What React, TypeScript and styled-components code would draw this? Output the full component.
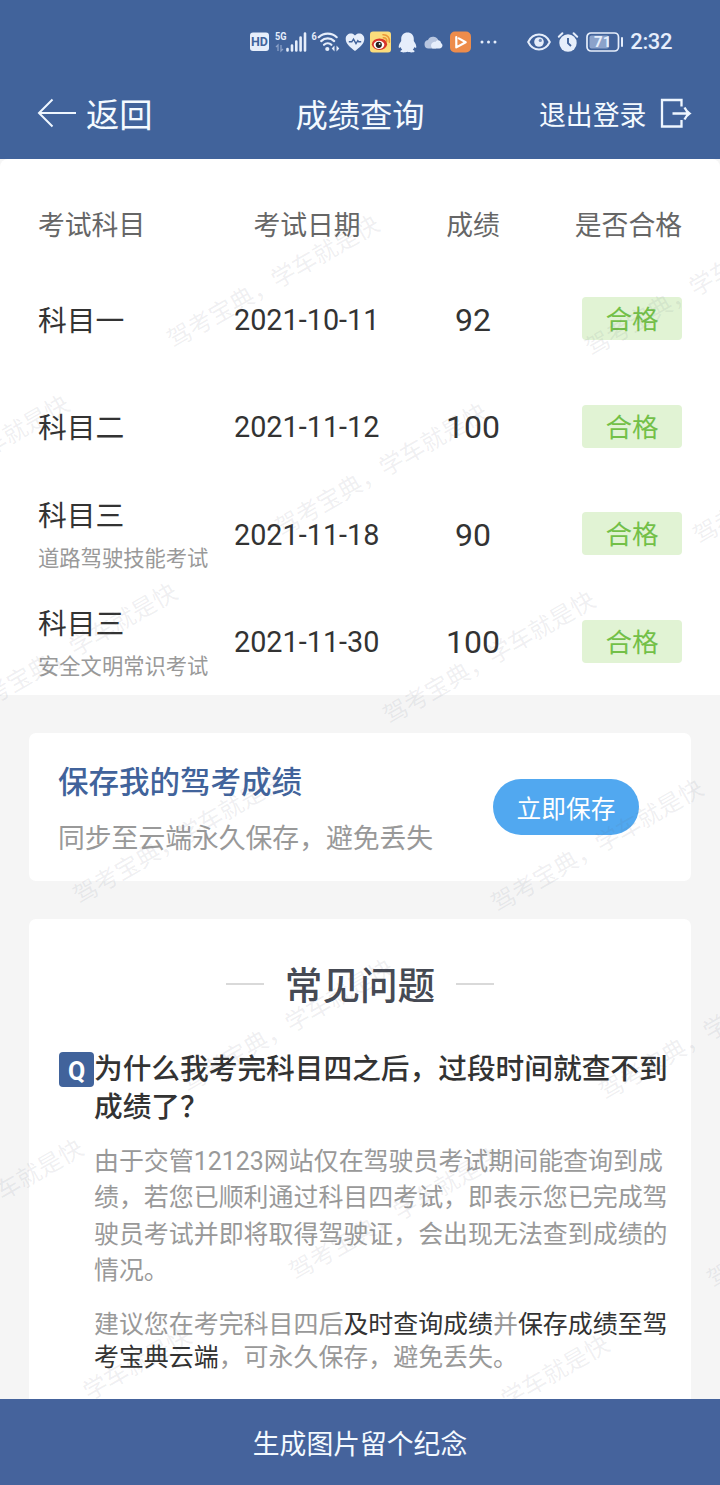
import React from 'react';
import styled, { createGlobalStyle } from 'styled-components';

const GlobalStyle = createGlobalStyle`
  * { box-sizing: border-box; }
  body {
    margin: 0;
    background: #f5f5f5;
    font-family: Roboto, 'Noto Sans CJK SC', sans-serif;
    color: #333;
  }
`;

const Screen = styled.div`
  position: relative;
  width: 720px;
  height: 1485px;
  display: flex;
  flex-direction: column;
  overflow: hidden;
`;

const TopBar = styled.header`
  position: relative;
  z-index: 3;
  flex: none;
  height: 159px;
  background: #41639b;
  color: #f4faff;
`;

const StatusBar = styled.div`
  height: 84px;
  padding: 0 48px 0 249px;
  display: flex;
  align-items: center;
  justify-content: space-between;
`;

const StatusGroup = styled.div`
  display: flex;
  align-items: center;
`;

const Glyph = styled.svg<{ $gap?: number; $before?: number }>`
  display: block;
  flex: none;
  margin-left: ${({ $before = 0 }) => $before}px;
  margin-right: ${({ $gap = 0 }) => $gap}px;
  overflow: visible;
`;

const Clock = styled.span`
  font-size: 22px;
  line-height: 30px;
  letter-spacing: -0.4px;
  font-weight: 500;
  color: #e6eefb;
`;

const NavBar = styled.nav`
  height: 62px;
  padding: 0 29px 0 37px;
  display: grid;
  grid-template-columns: 196px 1fr 204px;
  align-items: center;
`;

const NavAction = styled.div<{ $end?: boolean; $size: number }>`
  display: flex;
  align-items: center;
  justify-content: ${({ $end }) => ($end ? 'flex-end' : 'flex-start')};
  font-size: ${({ $size }) => $size}px;
  line-height: 44px;
  white-space: nowrap;
`;

const NavLabel = styled.span`
  padding-top: 2px;
`;

const NavTitle = styled.h1`
  margin: 0;
  padding-top: 2px;
  font-size: 32.3px;
  line-height: 44px;
  font-weight: 400;
  text-align: center;
  white-space: nowrap;
`;

const Scores = styled.section`
  flex: none;
  height: 536px;
  background: #fff;
  border-radius: 8px 8px 0 0;
`;

const ScoreRow = styled.div<{ $head?: boolean }>`
  height: ${({ $head }) => ($head ? 106 : 107.5)}px;
  padding: ${({ $head }) => ($head ? '22px' : '0')} 38px 0;
  display: grid;
  grid-template-columns: 196px 146px 186px 1fr;
  align-items: center;
  font-size: 26.8px;
  color: ${({ $head }) => ($head ? '#666' : '#333')};
  white-space: nowrap;
`;

const Cell = styled.div<{ $align?: string }>`
  display: flex;
  justify-content: ${({ $align = 'flex-start' }) => $align};
`;

const Subject = styled.div`
  padding-top: 4px;
  display: flex;
  flex-direction: column;
`;

const SubjectName = styled.span`
  font-size: 28.8px;
  line-height: 42px;
`;

const SubjectNote = styled.span`
  font-size: 21.3px;
  line-height: 34px;
  margin-top: 5px;
  color: #999;
`;

const ExamDate = styled.span`
  padding-top: 2px;
  font-size: 28.8px;
  line-height: 40px;
`;

const Score = styled.span`
  padding-top: 2px;
  font-size: 32px;
  line-height: 42px;
`;

const PassBadge = styled.span`
  width: 100px;
  height: 43px;
  border-radius: 4px;
  background: #e1f3d4;
  color: #73c048;
  font-size: 26.6px;
  line-height: 46px;
  text-align: center;
`;

const Card = styled.section`
  flex: none;
  width: 662px;
  margin: 38px auto 0;
  background: #fff;
  border-radius: 7px;
`;

const SaveCard = styled(Card)`
  height: 148px;
  padding: 0 52px 0 29px;
  display: flex;
  align-items: center;
  justify-content: space-between;
  white-space: nowrap;
`;

const SaveCopy = styled.div`
  padding-top: 6px;
`;

const SaveTitle = styled.h2`
  margin: 0;
  font-size: 30.5px;
  line-height: 44px;
  font-weight: 500;
  color: #41639b;
`;

const SaveHint = styled.p`
  margin: 14px 0 0;
  font-size: 26.8px;
  line-height: 40px;
  color: #999;
`;

const SaveButton = styled.button`
  width: 146px;
  height: 56px;
  padding: 0;
  border: 0;
  border-radius: 28px;
  background: #51a8f0;
  color: #fff;
  font: 400 24.7px/56px Roboto, 'Noto Sans CJK SC', sans-serif;
`;

const SaveLabel = styled.span`
  display: block;
  padding-top: 3px;
`;

const FaqCard = styled(Card)`
  height: 490px;
  padding: 41px 0 0 30px;
`;

const FaqHeading = styled.h2`
  margin: 0 30px 0 0;
  display: flex;
  align-items: center;
  justify-content: center;
  gap: 21px;
  font-size: 37.6px;
  line-height: 52px;
  font-weight: 500;
  color: #464a54;

  &::before,
  &::after {
    content: '';
    width: 38px;
    height: 2px;
    background: #d9d9d9;
    margin-top: -5px;
  }
`;

const FaqEntry = styled.div`
  margin-top: 38px;
  display: flex;
  align-items: flex-start;
`;

const QMark = styled.span`
  width: 35px;
  height: 35px;
  margin-top: 2px;
  border-radius: 4px;
  background: #41639b;
  color: #fff;
  font-size: 25px;
  font-weight: 700;
  line-height: 39px;
  text-align: center;
`;

const FaqText = styled.div`
  white-space: nowrap;
`;

const Question = styled.h3`
  margin: 0;
  font-size: 28.7px;
  line-height: 38px;
  font-weight: 500;
  color: #333;
`;

const Answer = styled.p<{ $leading: number; $top: number }>`
  margin: ${({ $top }) => $top}px 0 0;
  font-size: 24.94px;
  line-height: ${({ $leading }) => $leading}px;
  color: #999;
`;

const Strong = styled.strong`
  font-weight: 400;
  color: #333;
`;

const Footer = styled.footer`
  position: relative;
  z-index: 3;
  flex: none;
  height: 86px;
  margin-top: auto;
  background: #45639c;
  color: #f4faff;
  font-size: 26.8px;
  line-height: 92px;
  text-align: center;
`;

const Content = styled.main`
  flex: 1 1 0;
  min-height: 0;
  display: flex;
  flex-direction: column;
  overflow: hidden;
`;

const WatermarkLayer = styled.div`
  position: absolute;
  inset: 0;
  z-index: 2;
  overflow: hidden;
  pointer-events: none;
`;

const Watermark = styled.span<{ $x: number; $y: number }>`
  position: absolute;
  left: ${({ $x }) => $x}px;
  top: ${({ $y }) => $y - 30}px;
  font-size: 24px;
  line-height: 30px;
  white-space: nowrap;
  color: rgba(95, 105, 125, 0.1);
  transform: rotate(-30deg);
  transform-origin: 0 100%;
`;

const results = [
  { subject: '科目一', date: '2021-10-11', score: 92 },
  { subject: '科目二', date: '2021-11-12', score: 100 },
  { subject: '科目三', note: '道路驾驶技能考试', date: '2021-11-18', score: 90 },
  { subject: '科目三', note: '安全文明常识考试', date: '2021-11-30', score: 100 },
];

const watermarks = [
  [487, 167], [177, 355], [595, 363], [-133, 535], [285, 543], [703, 551],
  [-25, 723], [393, 731], [83, 911], [501, 919], [191, 1099], [609, 1107],
  [-119, 1279], [299, 1287], [717, 1295], [-11, 1467], [407, 1475],
];

const ink = '#e6eefb';

const StatusIcons = () => (
  <StatusGroup>
    <Glyph width="20" height="20" viewBox="0 0 20 20" $gap={6}>
      <rect x="1" y="0.5" width="19" height="18.5" rx="3" fill={ink} />
      <text x="10.5" y="14.3" fontSize="12.5" fontWeight="700" textAnchor="middle" fill="#41639b">HD</text>
    </Glyph>
    <Glyph width="32" height="22" viewBox="0 0 32 22" $gap={5}>
      <text x="0" y="9" fontSize="11.5" fontWeight="700" textLength="11.5" lengthAdjust="spacingAndGlyphs" fill={ink}>5G</text>
      <path d="M3 20v-6l-2 2M6 14v6l2-2" fill="none" stroke="#8ba1c8" strokeWidth="1.3" />
      <path d="M12.5 19.5v-1.5M17 19.5v-5M21.3 19.5v-9M25.6 19.5v-13M30 19.5v-17" stroke={ink} strokeWidth="2.6" strokeLinecap="round" />
    </Glyph>
    <Glyph width="28" height="22" viewBox="0 0 28 22" $gap={4.5}>
      <text x="-0.5" y="9" fontSize="11" fontWeight="700" textLength="5.2" lengthAdjust="spacingAndGlyphs" fill={ink}>6</text>
      <g fill="none" stroke={ink} strokeWidth="2.2" strokeLinecap="round">
        <path d="M6.7 6.2a13 13 0 0 1 18 0" />
        <path d="M9.2 10.1a9.3 9.3 0 0 1 13 0" />
        <path d="M12 13.8a5.3 5.3 0 0 1 7.4 0" />
      </g>
      <circle cx="15.3" cy="18" r="2.1" fill={ink} />
      <path d="M22.5 14.5v6l-2.8-3zM24.5 14.5v6l2.8-3z" fill={ink} />
    </Glyph>
    <Glyph width="20" height="20" viewBox="0 0 20 20" $gap={5.5}>
      <path d="M10 19C5.5 15.6.7 11.8.7 7 .7 1.4 7.2-.1 10 3.6c2.8-3.7 9.3-2.2 9.3 3.4 0 4.8-4.8 8.6-9.3 12z" fill={ink} />
      <path d="M3.8 9.8h3l1.7-2.7 2.5 4.6 1.8-3 .9 1.1h2.5" fill="none" stroke="#41639b" strokeWidth="1.4" />
    </Glyph>
    <Glyph width="21" height="22" viewBox="0 0 21 22" $gap={6.5}>
      <rect x="0" y="0.5" width="21" height="21" rx="3" fill="#fbdc7c" />
      <ellipse cx="9.5" cy="13.2" rx="7.6" ry="5.8" fill="#d8352b" />
      <ellipse cx="9" cy="13.8" rx="5.3" ry="4.1" fill="#fff" />
      <circle cx="8.8" cy="13.8" r="3.1" fill="#27211f" />
      <circle cx="9.6" cy="12.9" r="0.9" fill="#fff" />
      <path d="M13.4 6.8a3 3 0 0 1 3.3 3.7M13 3.7a6.1 6.1 0 0 1 6.4 7.4" fill="none" stroke="#ec9637" strokeWidth="1.6" strokeLinecap="round" />
    </Glyph>
    <Glyph width="19" height="21" viewBox="0 0 19 21" $gap={7.5}>
      <path d="M9.500.5c3.700 0 6.300 2.600 6.300 6.200v2.200c1.600 2.100 2.700 4.600 2.500 6.400-.4 1-1.200.4-1.900-.4-.3 1.100-.8 2-1.600 2.800 1.200.5 1.900 1.100 1.700 1.900-.3 1.100-5 1.100-7 .2-2 .9-6.700.9-7-.2-.2-.8.5-1.400 1.700-1.900-.8-.8-1.300-1.700-1.600-2.800-.7.8-1.500 1.400-1.900.4-.2-1.800.9-4.300 2.500-6.400V6.700C3.200 3.100 5.800.5 9.500.5z" fill={ink} />
    </Glyph>
    <Glyph width="19" height="15" viewBox="0 0 19 15" $gap={6.5}>
      <path d="M4.400 13.500a4.300 4.300 0 0 1-.4-8.500 5.600 5.600 0 0 1 10.600 1.300L12 13.500z" fill="#b8c6e0" />
      <path d="M8.500 13.500C6.500 11.500 6.700 8.700 8.700 7.500c1-.7 1.700-.8 2.700-.6 1.400-2.600 5.400-2 5.600 1.200 2.600 1.400 1.600 5.400-1.500 5.400z" fill={ink} />
    </Glyph>
    <Glyph width="21" height="22" viewBox="0 0 21 22" $gap={9}>
      <rect x="0" y="0.5" width="21" height="21" rx="5" fill="#ed8c4b" />
      <path d="M6.300 6.200v10.200l9.400-5.200L8.800 7.400" fill="none" stroke="#fff" strokeWidth="2.200" strokeLinejoin="round" strokeLinecap="round" />
    </Glyph>
    <Glyph width="18" height="4" viewBox="0 0 18 4">
      <circle cx="2" cy="2" r="1.500" fill={ink} />
      <circle cx="8.500" cy="2" r="1.500" fill={ink} />
      <circle cx="15" cy="2" r="1.500" fill={ink} />
    </Glyph>
  </StatusGroup>
);

const SystemIcons = () => (
  <StatusGroup>
    <Glyph width="24" height="18" viewBox="0 0 24 18" $gap={7}>
      <path d="M1.200 9C6-.9 18-.9 22.800 9 18 18.900 6 18.900 1.200 9z" fill="none" stroke={ink} strokeWidth="2" />
      <circle cx="12" cy="9" r="4.800" fill={ink} />
      <circle cx="13.300" cy="7.400" r="1.600" fill="#6f8ab8" />
    </Glyph>
    <Glyph width="20" height="20" viewBox="0 0 20 20" $gap={8}>
      <circle cx="10" cy="11" r="8.700" fill={ink} />
      <path d="M10 6v5.200l3 2.800" fill="none" stroke="#41639b" strokeWidth="1.900" />
      <path d="M.8 4.800l3.600-3.500M19.200 4.800l-3.600-3.500" stroke={ink} strokeWidth="2" strokeLinecap="round" />
    </Glyph>
    <Glyph width="38" height="20" viewBox="0 0 38 20" $gap={6}>
      <rect x="1" y="1" width="31.500" height="18" rx="4" fill="none" stroke={ink} strokeWidth="1.700" />
      <rect x="3.500" y="3.500" width="19.500" height="13" rx="2" fill="#8ba2ca" />
      <rect x="35" y="5" width="2" height="10" rx="1" fill={ink} />
      <text x="16.700" y="15.200" fontSize="15" fontWeight="700" textAnchor="middle" fill={ink}>71</text>
    </Glyph>
    <Clock>2:32</Clock>
  </StatusGroup>
);

export default function App() {
  return (
    <Screen>
      <GlobalStyle />
      <TopBar>
        <StatusBar>
          <StatusIcons />
          <SystemIcons />
        </StatusBar>
        <NavBar>
          <NavAction $size={33.3}>
            <Glyph width="40" height="32" viewBox="0 0 40 32" $gap={9}>
              <path d="M39 14H2M15.500 0.500L2 14l13.500 13.500" fill="none" stroke="#eef6ff" strokeWidth="2" />
            </Glyph>
            <NavLabel>返回</NavLabel>
          </NavAction>
          <NavTitle>成绩查询</NavTitle>
          <NavAction $size={26.9} $end>
            <NavLabel>退出登录</NavLabel>
            <Glyph width="31" height="34" viewBox="0 0 31 34" $before={13.500}>
              <path d="M21.500 8.500V2H2v26.500h19.500V22M12.500 15.500H29M24.500 9.500c1.200 2.500 2.700 4.500 5 6-2.300 1.500-3.800 3.500-5 6" fill="none" stroke="#eef6ff" strokeWidth="2.300" />
            </Glyph>
          </NavAction>
        </NavBar>
      </TopBar>

      <Content>
        <Scores>
          <ScoreRow $head>
            <Cell>考试科目</Cell>
            <Cell $align="center">考试日期</Cell>
            <Cell $align="center">成绩</Cell>
            <Cell $align="flex-end">是否合格</Cell>
          </ScoreRow>
          {results.map((r) => (
            <ScoreRow key={r.date}>
              <Subject>
                <SubjectName>{r.subject}</SubjectName>
                {r.note && <SubjectNote>{r.note}</SubjectNote>}
              </Subject>
              <Cell><ExamDate>{r.date}</ExamDate></Cell>
              <Cell $align="center"><Score>{r.score}</Score></Cell>
              <Cell $align="flex-end"><PassBadge>合格</PassBadge></Cell>
            </ScoreRow>
          ))}
        </Scores>

        <SaveCard>
          <SaveCopy>
            <SaveTitle>保存我的驾考成绩</SaveTitle>
            <SaveHint>同步至云端永久保存，避免丢失</SaveHint>
          </SaveCopy>
          <SaveButton><SaveLabel>立即保存</SaveLabel></SaveButton>
        </SaveCard>

        <FaqCard>
          <FaqHeading>常见问题</FaqHeading>
          <FaqEntry>
            <QMark>Q</QMark>
            <FaqText>
              <Question>
                为什么我考完科目四之后，过段时间就查不到<br />成绩了？
              </Question>
              <Answer $leading={36.4} $top={18}>
                由于交管12123网站仅在驾驶员考试期间能查询到成<br />
                绩，若您已顺利通过科目四考试，即表示您已完成驾<br />
                驶员考试并即将取得驾驶证，会出现无法查到成绩的<br />
                情况。
              </Answer>
              <Answer $leading={33} $top={18}>
                建议您在考完科目四后<Strong>及时查询成绩</Strong>并<Strong>保存成绩至驾</Strong><br />
                <Strong>考宝典云端</Strong>，可永久保存，避免丢失。
              </Answer>
            </FaqText>
          </FaqEntry>
        </FaqCard>
      </Content>

      <Footer>生成图片留个纪念</Footer>

      <WatermarkLayer aria-hidden>
        {watermarks.map(([x, y]) => (
          <Watermark key={`${x}:${y}`} $x={x} $y={y}>驾考宝典，学车就是快</Watermark>
        ))}
      </WatermarkLayer>
    </Screen>
  );
}
